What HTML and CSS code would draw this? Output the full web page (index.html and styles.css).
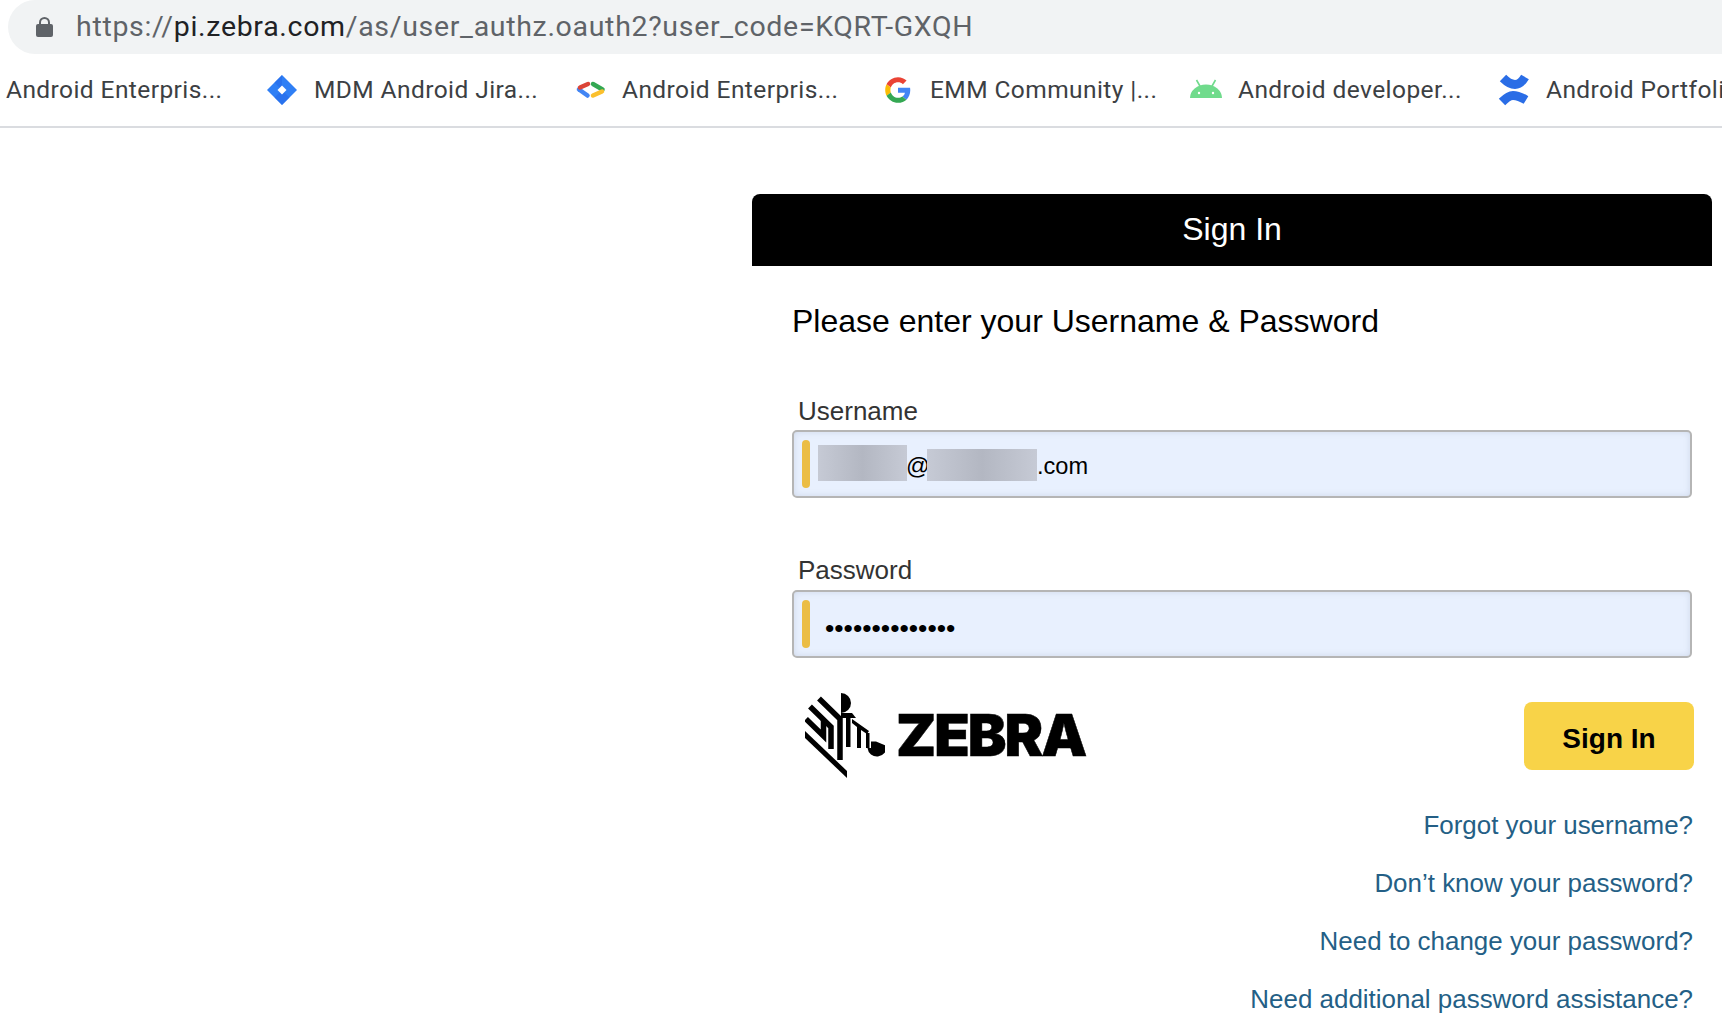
FILE: index.html
```html
<!DOCTYPE html>
<html lang="en">
<head>
<meta charset="utf-8">
<title>Sign In</title>
<link rel="stylesheet" href="styles.css">
</head>
<body>
<header class="chrome">
  <div class="address">
    <svg class="lock" viewBox="0 0 17 20"><path d="M4 8V5.500a4.500 4.500 0 0 1 9 0V8" fill="none" stroke="#5f6368" stroke-width="2"/><rect x="0" y="7" width="17" height="13" rx="2" fill="#5f6368"/></svg>
    <div class="url">https://<span class="domain">pi.zebra.com</span>/as/user_authz.oauth2?user_code=KQRT-GXQH</div>
  </div>
  <nav class="bookmarks">
    <a class="bm bm-first">Android Enterpris...</a>
    <a class="bm"><svg class="fav" viewBox="0 0 32 32"><path d="M16 1 31 16 16 31 1 16Z" fill="#2f7ff5"/><path d="M16 1 8.500 8.500 16 16Z M8.500 23.500 16 31 23.500 23.500 16 16Z" fill="#2568e8" opacity=".55"/><path d="M16 11.500 20.500 16 16 20.500 11.500 16Z" fill="#fff"/></svg>MDM Android Jira...</a>
    <a class="bm"><svg class="fav" viewBox="0 0 32 32" fill="none" stroke-width="4.500" stroke-linecap="round"><path d="M5 15.500 13.500 21.500" stroke="#4285f4"/><path d="M6 13.500 14 10" stroke="#db4437"/><path d="M19 10 28.500 15.500" stroke="#34a853"/><path d="M19 21.500 28 17.500" stroke="#fbc02d"/></svg>Android Enterpris...</a>
    <a class="bm"><svg class="fav" viewBox="-6 -6 60 60"><path fill="#EA4335" d="M24 9.500c3.540 0 6.710 1.220 9.210 3.600l6.850-6.850C35.900 2.380 30.470 0 24 0 14.620 0 6.510 5.380 2.560 13.220l7.980 6.190C12.430 13.720 17.740 9.500 24 9.500z"/><path fill="#4285F4" d="M46.980 24.550c0-1.570-.15-3.090-.38-4.550H24v9.020h12.940c-.58 2.960-2.260 5.480-4.780 7.180l7.730 6c4.510-4.180 7.090-10.360 7.090-17.650z"/><path fill="#FBBC05" d="M10.530 28.590c-.48-1.450-.76-2.990-.76-4.590s.27-3.140.76-4.590l-7.980-6.190C.92 16.460 0 20.120 0 24c0 3.880.92 7.540 2.560 10.780l7.970-6.190z"/><path fill="#34A853" d="M24 48c6.480 0 11.930-2.130 15.890-5.810l-7.730-6c-2.150 1.450-4.920 2.300-8.160 2.300-6.260 0-11.570-4.220-13.470-9.910l-7.980 6.190C6.510 42.620 14.620 48 24 48z"/></svg>EMM Community |...</a>
    <a class="bm"><svg class="fav" viewBox="0 0 32 32"><path d="M0 24A16 13.500 0 0 1 32 24Z" fill="#70db8c"/><path d="M10.500 13 6.500 6M21.500 13 25.500 6" stroke="#70db8c" stroke-width="1.600" fill="none"/><circle cx="9" cy="19" r="1.200" fill="#fff"/><circle cx="23" cy="19" r="1.200" fill="#fff"/></svg>Android developer...</a>
    <a class="bm"><svg class="fav" viewBox="0 0 32 32" fill="none" stroke="#2a6de6" stroke-width="9"><path d="M5 4C9 8 13 10.500 17 10.500 21 10.500 24 8 27 3"/><path d="M4 28C8 24 11 21.500 15 21.500 19 21.500 23 23 28 26"/></svg>Android Portfolio</a>
  </nav>
</header>
<main class="page">
  <section class="card">
    <h1 class="card-title">Sign In</h1>
    <form class="form">
      <h2 class="prompt">Please enter your Username &amp; Password</h2>
      <div class="field">
        <label class="label">Username</label>
        <div class="input">
          <span class="mark"></span>
          <span class="redact redact-a"></span><span class="at">@</span><span class="redact redact-b"></span><span class="tld">.com</span>
        </div>
      </div>
      <div class="field">
        <label class="label">Password</label>
        <div class="input">
          <span class="mark"></span>
          <span class="dots">••••••••••••••</span>
        </div>
      </div>
      <div class="actions">
        <div class="logo">
          <svg class="logo-mark" viewBox="5 4 80 90">
            <path d="M5 43 47 83V90L5 50Z"/>
            <path d="M6 31 23.500 48V31" fill="none" stroke="#000" stroke-width="5.500"/>
            <path d="M10 18.500 31 39V61" fill="none" stroke="#000" stroke-width="5.500"/>
            <path d="M19 10.500 40 31V72" fill="none" stroke="#000" stroke-width="5.500"/>
            <path d="M41 5A10 10 0 0 1 41 25Z"/>
            <path d="M41 25H52L56 30H41Z"/>
            <path d="M46 28H50.500V59H46Z"/>
            <path d="M52 31 69 43 67 46 61 42V60H57V39L52 35Z"/>
            <path d="M66 45H69.500V60H66Z"/>
            <path d="M71 53.500 76 53.500 86.500 58A9.500 9.500 0 0 1 67.500 60H71Z"/>
          </svg>
          <span class="wordmark">ZEBRA</span>
        </div>
        <button class="submit" type="button">Sign In</button>
      </div>
      <ul class="links">
        <li><a>Forgot your username?</a></li>
        <li><a>Don’t know your password?</a></li>
        <li><a>Need to change your password?</a></li>
        <li><a>Need additional password assistance?</a></li>
      </ul>
    </form>
  </section>
</main>
</body>
</html>
```
FILE: styles.css
```css
* { box-sizing: border-box; }
html, body { margin: 0; height: 100%; }
body { overflow: hidden; background: #fff; font-family: "Liberation Sans", Arial, sans-serif; color: #000; }

.chrome { height: 128px; border-bottom: 2px solid #dadce0; }
.address { height: 54px; margin-left: 8px; padding-left: 28px; display: flex; align-items: center; gap: 23px; background: #f1f3f4; border-radius: 27px 0 0 27px; }
.lock { width: 17px; height: 20px; flex: none; }
.url { padding-bottom: 2px; font-family: Roboto, sans-serif; font-size: 28.500px; letter-spacing: .68px; color: #5f6368; white-space: nowrap; }
.domain { color: #202124; }

.bookmarks { height: 72px; padding: 0 0 2px 6px; display: flex; align-items: center; overflow: hidden; }
.bm { flex: none; width: 308px; display: flex; align-items: center; gap: 16px; font-family: Roboto, sans-serif; font-size: 24.500px; letter-spacing: .42px; color: #3c4043; white-space: nowrap; }
.bm-first { width: 260px; }
.fav { width: 32px; height: 32px; flex: none; margin-top: 2px; }

.page { padding: 66px 10px 0 752px; }
.card { width: 960px; }
.card-title { margin: 0; height: 72px; padding-bottom: 2px; display: flex; align-items: center; justify-content: center; background: #000; color: #fff; font-size: 32px; font-weight: 400; border-radius: 8px 8px 0 0; }
.form { width: 902px; margin-left: 40px; }
.prompt { margin: 35px 0 0; font-size: 32px; line-height: 40px; font-weight: 400; }
.field { width: 900px; margin-top: 54px; }
.field + .field { margin-top: 56px; }
.label { display: block; margin-left: 6px; font-size: 26px; line-height: 32px; color: #333; }
.input { height: 68px; margin-top: 3px; padding-left: 8px; display: flex; align-items: center; background: #e8f0fe; border: 2px solid #b5b5b5; border-radius: 5px; box-shadow: inset 0 0 6px rgba(120, 130, 160, .22); font-size: 23.600px; color: #000; }
.field + .field .input { margin-top: 4px; }
.mark { width: 8px; height: 48px; margin-right: 8px; flex: none; background: #ebbd45; border-radius: 4px; }
.redact { display: block; background: linear-gradient(90deg, #c6cad5, #b3b7c2 50%, #c6cad5); }
.redact-a { width: 89px; height: 36px; margin-bottom: 2px; }
.redact-b { width: 110px; height: 32px; margin-top: 2px; }
.at { width: 20px; margin-top: 5px; margin-left: -1px; margin-right: 1px; }
.tld { margin-top: 5px; }
.dots { margin: 9px 0 0 7px; font-size: 26.600px; line-height: 1; }

.actions { height: 86px; margin-top: 34px; display: flex; justify-content: space-between; align-items: flex-start; }
.logo { height: 86px; margin-left: 13px; display: flex; align-items: center; gap: 11px; }
.logo-mark { width: 80px; height: 90px; flex: none; align-self: flex-start; }
.wordmark { font-family: Inter, sans-serif; font-size: 58px; font-weight: 900; line-height: 1; letter-spacing: -2px; color: #000; -webkit-text-stroke: .5px #000; }
.submit { width: 170px; height: 68px; margin-top: 10px; padding-top: 7px; background: #f8d348; border: 0; border-radius: 8px; font: 700 28px "Liberation Sans", Arial, sans-serif; color: #000; }

.links { margin: 31px 1px 0 0; padding: 0; list-style: none; text-align: right; font-size: 25.950px; line-height: 32px; color: #245f86; }
.links li + li { margin-top: 26px; }
```
